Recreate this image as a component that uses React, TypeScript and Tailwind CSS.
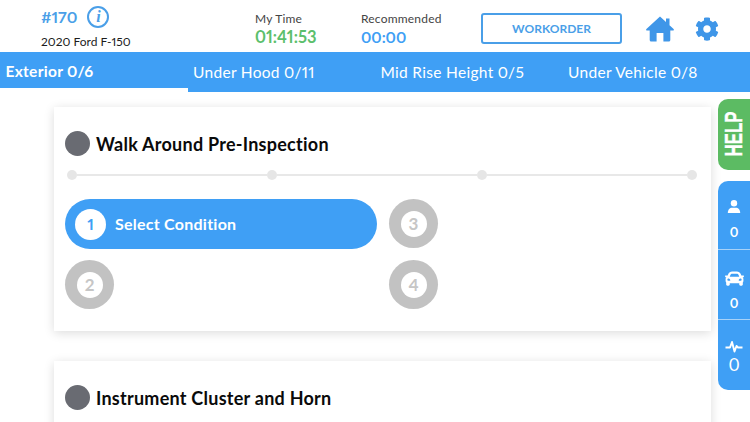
import React from "react";
import { FaCog, FaCar } from "react-icons/fa";

const tabs = [
  { label: "Exterior 0/6", active: true },
  { label: "Under Hood 0/11" },
  { label: "Mid Rise Height 0/5" },
  { label: "Under Vehicle 0/8" },
];

function Numbered({ n }: { n: number }) {
  return (
    <div className="flex h-[49px] w-[49px] items-center justify-center rounded-full bg-[#c2c2c2]">
      <div className="flex h-[26px] w-[26px] items-center justify-center rounded-full bg-white text-[17px] font-bold text-[#c6c6c6]">
        {n}
      </div>
    </div>
  );
}

function CardTitle({ children }: { children: React.ReactNode }) {
  return (
    <div className="flex h-[25px] items-start gap-[6px]">
      <div className="h-[25px] w-[25px] rounded-full bg-[#696b72]" />
      <div className="text-[18px] leading-[27px] font-bold tracking-[0.25px] text-[#0a0a0a]">{children}</div>
    </div>
  );
}

function Dot() {
  return <div className="h-[10px] w-[10px] shrink-0 rounded-full bg-[#e6e6e6]" />;
}
function Seg({ w }: { w: string }) {
  return <div className={`h-[2px] bg-[#e8e8e8] ${w}`} />;
}

export default function App() {
  return (
    <div
      className="flex h-[422px] w-[750px] flex-col overflow-hidden bg-white lining-nums proportional-nums"
      style={{ fontFamily: '"Lato", "Open Sans", sans-serif' }}
    >
      {/* Header */}
      <div className="flex h-[52px] shrink-0 items-start">
        <div className="ml-[41px] w-[214px] pt-[5px]">
          <div className="flex h-[24px] items-center gap-[10px]">
            <span className="text-[16px] font-bold text-[#4a9fe8]">#170</span>
            <div className="flex h-[22px] w-[22px] items-center justify-center rounded-full border-2 border-[#4a9fe8]">
              <span
                className="text-[16px] leading-none font-bold text-[#4a9fe8] italic"
                style={{ fontFamily: '"Liberation Serif", serif' }}
              >
                i
              </span>
            </div>
          </div>
          <div className="mt-[5px] text-[12px] leading-[16px] text-[#1c1c1c]">2020 Ford F-150</div>
        </div>
        <div className="w-[106px] pt-[11px]">
          <div className="text-[12px] leading-[16px] tracking-[0.2px] text-[#444]">My Time</div>
          <div className="text-[16.5px] leading-[20px] font-bold text-[#5cbf6c]">01:41:53</div>
        </div>
        <div className="w-[120px] pt-[11px]">
          <div className="text-[12px] leading-[16px] tracking-[0.2px] text-[#444]">Recommended</div>
          <div className="text-[15.5px] leading-[20px] font-bold text-[#3f9ff5]">00:00</div>
        </div>
        <div className="mt-[13px] flex h-[31px] w-[141px] items-center justify-center rounded-[3px] border-2 border-[#4a9fe8] text-[12px] font-bold text-[#4a9fe8]">
          WORKORDER
        </div>
        <svg className="mt-[16px] ml-[24px]" width="28" height="26" viewBox="0 0 28 26" fill="#3f96e8">
          <path d="M14 0.5 L20 6 V2.5 H23.5 V9.2 L27.6 13 C28.2 13.8 27.7 14.6 26.8 14.6 H24.3 V24 C24.3 24.9 23.7 25.5 22.8 25.5 H17.4 V17 H10.6 V25.5 H5.2 C4.3 25.5 3.7 24.9 3.7 24 V14.6 H1.2 C0.3 14.6 -0.2 13.8 0.4 13 Z" />
        </svg>
        <FaCog className="mt-[17px] ml-[21px] text-[#3f96e8]" size={24} />
      </div>

      {/* Tabs */}
      <div className="flex h-[40px] shrink-0 bg-[#3f9ff5]">
        {tabs.map((t) => (
          <div
            key={t.label}
            className={`flex w-[187.5px] items-center pl-[5.5px] text-[15.5px] tracking-[0.3px] text-white ${
              t.active ? "border-b-4 border-white pt-[4px] font-bold" : "pt-[1px]"
            }`}
          >
            {t.label}
          </div>
        ))}
      </div>

      {/* Body */}
      <div className="flex min-h-0 flex-1 pl-[54px]">
        <div className="flex w-[657px] shrink-0 flex-col gap-[30px] pt-[15px]">
          <div className="h-[224px] shrink-0 bg-white px-[11px] pt-[24px] shadow-[0_2px_10px_rgba(0,0,0,0.14)]">
            <CardTitle>Walk Around Pre-Inspection</CardTitle>
            <div className="mt-[14px] ml-[2px] flex items-center">
              <Dot />
              <Seg w="w-[190px]" />
              <Dot />
              <Seg w="w-[200px]" />
              <Dot />
              <Seg w="w-[200px]" />
              <Dot />
            </div>
            <div className="mt-[19px] grid grid-cols-[312px_49px] gap-x-[12px] gap-y-[11px]">
              <div className="flex h-[50px] items-center rounded-full bg-[#3f9ff5] pl-[10px]">
                <div className="flex h-[31px] w-[31px] items-center justify-center rounded-full bg-white text-[16px] font-bold text-[#3f9ff5]">
                  1
                </div>
                <span className="ml-[9px] text-[16px] font-bold tracking-[0.25px] text-white">Select Condition</span>
              </div>
              <Numbered n={3} />
              <Numbered n={2} />
              <Numbered n={4} />
            </div>
          </div>
          <div className="h-[200px] shrink-0 bg-white px-[11px] pt-[24px] shadow-[0_2px_10px_rgba(0,0,0,0.14)]">
            <CardTitle>Instrument Cluster and Horn</CardTitle>
          </div>
        </div>

        {/* Side rail */}
        <div className="ml-[7px] flex w-[32px] shrink-0 flex-col gap-[11px] pt-[7px]">
          <div className="flex h-[71px] items-center justify-center overflow-hidden rounded-l-[10px] bg-[#5cbb63]">
            <span
              className="rotate-180 scale-y-[0.7] text-[24px] leading-none font-bold text-white [-webkit-text-stroke:0.4px_white] [writing-mode:vertical-rl]"
              style={{ fontFamily: '"Liberation Sans", sans-serif' }}
            >
              HELP
            </span>
          </div>
          <div className="flex h-[209px] flex-col rounded-l-[10px] bg-[#3f9ff5] text-white">
            <div className="flex h-[69px] flex-col items-center border-b border-[#a8d2f8] pt-[19px]">
              <svg width="14" height="13" viewBox="0 0 14 13" fill="white">
                <circle cx="7" cy="3.2" r="3.2" />
                <path d="M0.8 13 C0.8 9.6 3 7.8 5 7.8 H9 C11 7.8 13.2 9.6 13.2 13 Z" />
              </svg>
              <span className="mt-[12px] text-[13px] leading-[14px] font-bold">0</span>
            </div>
            <div className="flex h-[70px] flex-col items-center border-b border-[#a8d2f8] pt-[19px]">
              <FaCar size={19} />
              <span className="mt-[8px] text-[13px] leading-[14px] font-bold">0</span>
            </div>
            <div className="flex flex-1 flex-col items-center pt-[20px]">
              <svg width="18" height="13" viewBox="0 0 18 13" fill="none" stroke="white" strokeWidth="1.9" strokeLinejoin="round">
                <path d="M0.5 7.5H5L7 2L9.5 11.5L11.5 6L13 7.5H17.5" />
              </svg>
              <span className="mt-[2px] text-[17px] leading-[20px]">0</span>
            </div>
          </div>
        </div>
      </div>
    </div>
  );
}
